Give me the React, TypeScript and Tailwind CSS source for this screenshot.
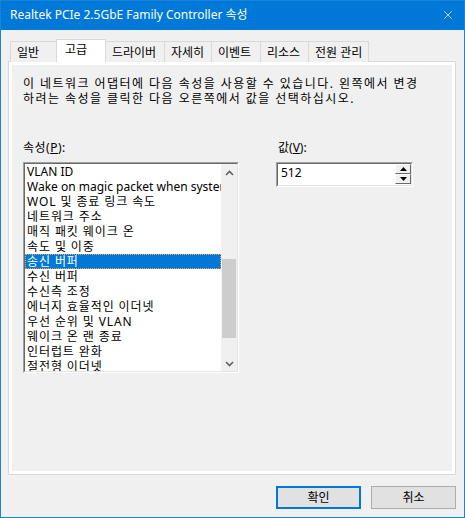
import { X } from "lucide-react";

const font = "font-['Noto_Sans','Noto_Sans_CJK_KR',sans-serif]";

const tabs = [
  { label: "일반", w: "w-[47px]" },
  { label: "고급", w: "w-[50px]", active: true },
  { label: "드라이버", w: "w-[59px]" },
  { label: "자세히", w: "w-[47px]" },
  { label: "이벤트", w: "w-[49px]" },
  { label: "리소스", w: "w-[48px]" },
  { label: "전원 관리", w: "w-[61px]" },
];

const props = [
  "VLAN ID",
  "Wake on magic packet when system",
  "WOL 및 종료 링크 속도",
  "네트워크 주소",
  "매직 패킷 웨이크 온",
  "속도 및 이중",
  "송신 버퍼",
  "수신 버퍼",
  "수신측 조정",
  "에너지 효율적인 이더넷",
  "우선 순위 및 VLAN",
  "웨이크 온 랜 종료",
  "인터럽트 완화",
  "절전형 이더넷",
];

const hasHangul = (s: string) => /[\uac00-\ud7a3]/.test(s);

function Chevron({ down }: { down?: boolean }) {
  return (
    <svg width="9" height="6" viewBox="0 0 9 6" className={down ? "rotate-180" : ""}>
      <path d="M1 5 L4.5 1.5 L8 5" fill="none" stroke="#606060" strokeWidth="1.6" />
    </svg>
  );
}

function Triangle({ down }: { down?: boolean }) {
  return (
    <svg width="7" height="4" viewBox="0 0 7 4">
      <path d={down ? "M0 0 H7 L3.5 4 Z" : "M0 4 H7 L3.5 0 Z"} fill="#000" />
    </svg>
  );
}

// sunken 3D frame used by the list and the spin edit
function Sunken({ className, children }: { className: string; children: React.ReactNode }) {
  return (
    <div className={`border border-t-[#a0a0a0] border-l-[#a0a0a0] border-b-white border-r-white ${className}`}>
      <div className="h-full border border-t-[#696969] border-l-[#696969] border-b-[#e3e3e3] border-r-[#e3e3e3] bg-white">
        {children}
      </div>
    </div>
  );
}

export default function App() {
  return (
    <div className={`${font} flex h-[518px] w-[465px] flex-col border border-[#1883d7] bg-[#f0f0f0] text-[12px] text-black`}>
      {/* title bar */}
      <div className="flex h-[29px] shrink-0 items-center justify-between bg-[#0078d7] pl-[9px] pr-[9px] text-white">
        <span className="-mt-[1px]">Realtek PCIe 2.5GbE Family Controller 속성</span>
        <X size={14} strokeWidth={1.25} className="-mt-[1px]" />
      </div>

      <div className="ml-[7px] mr-[8px] mt-[9px] flex flex-col">
        {/* tabs */}
        <div className="relative z-10 -mb-px flex items-end pl-[2px]">
          {tabs.map((t) =>
            t.active ? (
              <div
                key={t.label}
                className={`${t.w} -mx-[1px] flex h-[23px] items-start border border-b-0 border-[#d9d9d9] bg-white pl-[8px] pt-[1px] leading-[17px]`}
              >
                {t.label}
              </div>
            ) : (
              <div
                key={t.label}
                className={`${t.w} flex h-[21px] items-start border-l border-t border-[#d9d9d9] bg-[#f0f0f0] pl-[6px] pt-[2px] leading-[17px] last:border-r`}
              >
                {t.label}
              </div>
            )
          )}
        </div>

        {/* tab page */}
        <div className="h-[414px] border border-[#d9d9d9] bg-white p-[3px]">
          <div className="h-full bg-[#f0f0f0] pl-[11px] pt-[11px] leading-[15px]">
            <p className="whitespace-nowrap tracking-[1.45px]">
              이 네트워크 어댑터에 다음 속성을 사용할 수 있습니다. 왼쪽에서 변경
              <br />
              하려는 속성을 클릭한 다음 오른쪽에서 값을 선택하십시오.
            </p>

            <div className="mt-[34px] flex">
              <div className="flex w-[216px] flex-col">
                <span className="tracking-[0.5px]">
                  속성(<span className="underline">P</span>):
                </span>
                <Sunken className="mt-[7px] h-[211px]">
                  <div className="flex h-full overflow-hidden">
                    <ul className="min-w-0 flex-1">
                      {props.map((p, i) => {
                        const track = hasHangul(p) ? "tracking-[0.9px]" : "";
                        return i === 6 ? (
                          <li
                            key={p}
                            className={`${track} h-[15px] whitespace-nowrap bg-[#0078d7] pl-[2px] text-white outline-1 -outline-offset-1 outline-dotted outline-[#f0a050]`}
                          >
                            {p}
                          </li>
                        ) : (
                          <li key={p} className={`${track} h-[15px] overflow-hidden whitespace-nowrap pl-[2px]`}>
                            {p}
                          </li>
                        );
                      })}
                    </ul>
                    <div className="flex w-[16px] shrink-0 flex-col bg-[#f0f0f0]">
                      <div className="flex h-[17px] items-center justify-center">
                        <Chevron />
                      </div>
                      <div className="h-[78px]" />
                      <div className="mx-[1px] h-[79px] bg-[#cdcdcd]" />
                      <div className="flex-1" />
                      <div className="flex h-[15px] items-center justify-center">
                        <Chevron down />
                      </div>
                    </div>
                  </div>
                </Sunken>
              </div>

              <div className="ml-[37px] flex w-[137px] flex-col">
                <span className="pl-[2px]">
                  값(<span className="underline">V</span>):
                </span>
                <Sunken className="mt-[7px] h-[25px]">
                  <div className="flex h-full">
                    <span className="flex-1 pl-[3px] pt-[1px]">512</span>
                    <div className="flex w-[16px] flex-col pb-[1px]">
                      <div className="flex flex-1 items-center justify-center border border-b-[#696969] border-l-white border-r-[#696969] border-t-white bg-[#f0f0f0]">
                        <Triangle />
                      </div>
                      <div className="flex flex-1 items-center justify-center border border-b-[#696969] border-l-white border-r-[#696969] border-t-white bg-[#f0f0f0]">
                        <Triangle down />
                      </div>
                    </div>
                  </div>
                </Sunken>
              </div>
            </div>
          </div>
        </div>

        {/* buttons */}
        <div className="mt-[11px] flex justify-end gap-[10px]">
          <button className="flex h-[23px] w-[85px] items-center justify-center border-2 border-[#0078d7] bg-[#e1e1e1]">
            확인
          </button>
          <button className="flex h-[23px] w-[85px] items-center justify-center border border-[#adadad] bg-[#e1e1e1]">
            취소
          </button>
        </div>
      </div>
    </div>
  );
}
